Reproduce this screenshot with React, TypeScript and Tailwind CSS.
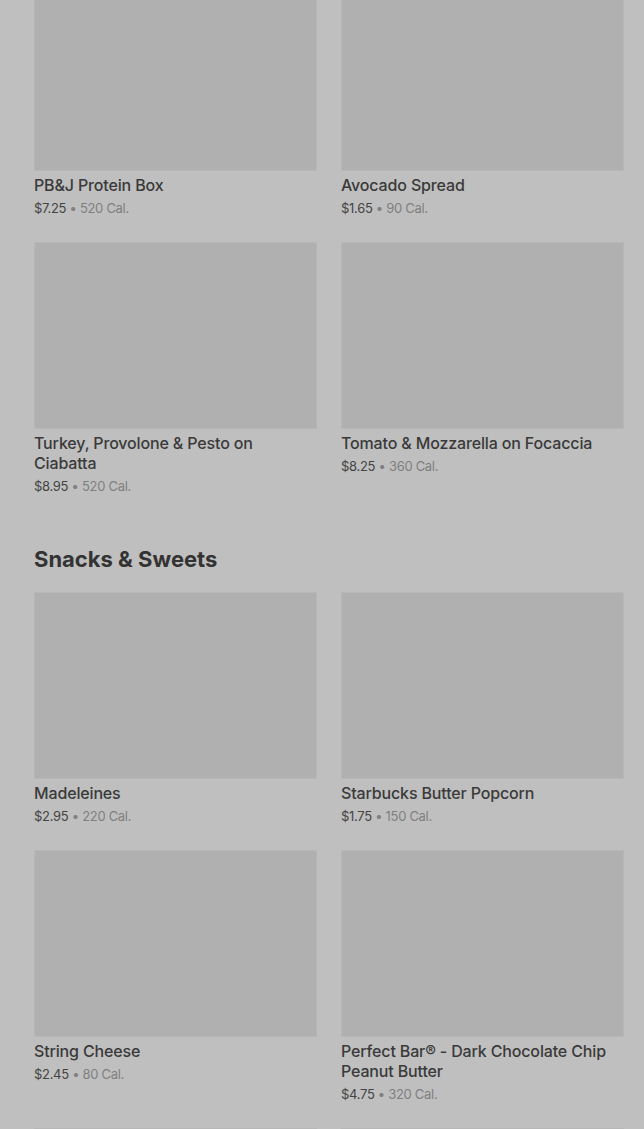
import React from "react";

type Item = { name: string; price: string; cal: string };

const Card = ({ item }: { item?: Item }) => (
  <div className="flex flex-col">
    <div className="h-[187px] w-full bg-[#b0b0b0] border border-[#b7b7b7]" />
    {item && (
      <>
        <div className="mt-1 text-[16px] leading-[20px] font-medium tracking-[-0.15px] text-[#3a3a3a]">
          {item.name}
        </div>
        <div className="mt-1 text-[13px] leading-[19px] tracking-[-0.3px]">
          <span className="text-[#444444]">{item.price}</span>
          <span className="text-[#808080]"> • {item.cal}</span>
        </div>
      </>
    )}
  </div>
);

const Grid = ({ items, extra = 0, className = "" }: { items: Item[]; extra?: number; className?: string }) => (
  <div className={`grid grid-cols-2 gap-x-6 gap-y-6 ${className}`}>
    {items.map((it) => (
      <Card key={it.name} item={it} />
    ))}
    {Array.from({ length: extra }).map((_, i) => (
      <Card key={`extra-${i}`} />
    ))}
  </div>
);

export default function App() {
  const first: Item[] = [
    { name: "PB&J Protein Box", price: "$7.25", cal: "520 Cal." },
    { name: "Avocado Spread", price: "$1.65", cal: "90 Cal." },
    { name: "Turkey, Provolone & Pesto on Ciabatta", price: "$8.95", cal: "520 Cal." },
    { name: "Tomato & Mozzarella on Focaccia", price: "$8.25", cal: "360 Cal." },
  ];
  const snacks: Item[] = [
    { name: "Madeleines", price: "$2.95", cal: "220 Cal." },
    { name: "Starbucks Butter Popcorn", price: "$1.75", cal: "150 Cal." },
    { name: "String Cheese", price: "$2.45", cal: "80 Cal." },
    { name: "Perfect Bar® - Dark Chocolate Chip Peanut Butter", price: "$4.75", cal: "320 Cal." },
  ];
  return (
    <div
      className="w-[644px] h-[1129px] overflow-hidden bg-[#bfbfbf]"
      style={{ fontFamily: "Inter, 'Noto Sans', sans-serif" }}
    >
      <div className="pl-[34px] pr-[20px]">
        <Grid items={first} className="mt-[-16px]" />
        <h2 className="mt-[47px] mb-[17px] text-[22px] leading-[32px] font-bold text-[#333333]">
          Snacks &amp; Sweets
        </h2>
        <Grid items={snacks} extra={2} />
      </div>
    </div>
  );
}
